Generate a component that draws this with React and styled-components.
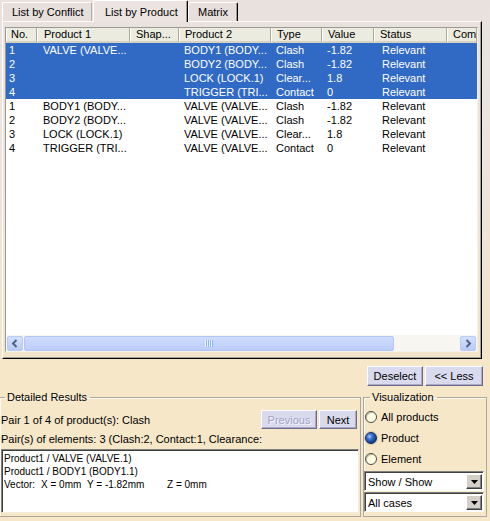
import React from 'react'
import styled, { createGlobalStyle } from 'styled-components'

const Global = createGlobalStyle`
  html, body { margin: 0; padding: 0; }
  body {
    background: #f6e7c8;
    font-family: "Liberation Sans", Arial, sans-serif;
    font-size: 11px;
    color: #000;
  }
`

const Window = styled.div`
  width: 490px;
  height: 521px;
  overflow: hidden;
  background: #f6e7c8;
  display: flex;
  flex-direction: column;
`

const TopArea = styled.div`
  background: linear-gradient(#e9e1de 0%, #ede5dc 55%, #f3e5cb 100%);
`

const TabStrip = styled.div`
  display: flex;
  align-items: flex-end;
  height: 21px;
  padding-left: 2px;
`

const Tab = styled.div`
  position: relative;
  box-sizing: border-box;
  height: ${p => (p.$active ? 22 : 19)}px;
  margin-bottom: ${p => (p.$active ? -1 : 0)}px;
  margin-left: ${p => (p.$active ? 1 : 0)}px;
  z-index: ${p => (p.$active ? 2 : 1)};
  width: ${p => p.$w}px;
  padding-left: ${p => (p.$active ? 11 : 9)}px;
  display: flex;
  align-items: center;
  background: ${p => (p.$active ? '#ebe4e1' : '#e7dfdb')};
  border-top: 1px solid #fff;
  border-left: 1px solid #fff;
  border-right: 1px solid ${p => (p.$dark ? '#000' : '#b4aca8')};
  box-shadow: ${p => (p.$dark ? 'inset -1px 0 0 #a09a96' : 'none')};
  border-radius: 2px 2px 0 0;
  white-space: nowrap;
`

const Panel = styled.div`
  box-sizing: border-box;
  width: 480px;
  height: 338px;
  margin-left: 2px;
  border-top: 1px solid #fff;
  border-left: 1px solid #fff;
  border-right: 1px solid #000;
  border-bottom: 1px solid #000;
  box-shadow: inset -1px -1px 0 #a8a29c;
  padding: 5px 3px 6px 2px;
`

const ListView = styled.div`
  box-sizing: border-box;
  height: 325px;
  border: 1px solid;
  border-color: #9c9894 #f4f0ea #f4f0ea #9c9894;
  background: #fff;
  display: flex;
  flex-direction: column;
`

const cols = '31px 93px 49px 92px 51px 52px 73px 30px'

const HeaderRow = styled.div`
  display: grid;
  grid-template-columns: ${cols};
  height: 15px;
  overflow: hidden;
`

const HeadCell = styled.div`
  box-sizing: border-box;
  height: 15px;
  line-height: 13px;
  padding-left: ${p => p.$pad}px;
  background: #ecebdf;
  border-left: 1px solid #fff;
  border-right: 1px solid #aca899;
  border-bottom: 2px solid #d6d2c2;
  white-space: nowrap;
  overflow: hidden;
`

const Rows = styled.div`
  flex: 1;
  overflow: hidden;
`

const Row = styled.div`
  display: grid;
  grid-template-columns: ${cols};
  height: 14px;
  line-height: 14px;
  background: ${p => (p.$sel ? '#316ac5' : '#fff')};
  color: ${p => (p.$sel ? '#fff' : '#000')};
`

const Cell = styled.div`
  padding-left: ${p => p.$pad}px;
  white-space: nowrap;
  overflow: hidden;
`

const HScroll = styled.div`
  display: flex;
  align-items: center;
  gap: 1px;
  height: 16px;
  padding: 0 1px;
  background: #f7f6f0;
`

const ScrollBtn = styled.div`
  box-sizing: border-box;
  width: 16px;
  height: 15px;
  border-radius: 2px;
  border: 1px solid #b9cbf3;
  background: linear-gradient(#d4e0fd, #b9cbf7);
  display: flex;
  align-items: center;
  justify-content: center;
`

const Thumb = styled.div`
  box-sizing: border-box;
  width: 370px;
  height: 15px;
  border-radius: 2px;
  border: 1px solid #b2c5f3;
  background: linear-gradient(#cfdcfd, #bccdf8);
  display: flex;
  align-items: center;
  justify-content: center;
`

const Track = styled.div`
  flex: 1;
`

const ButtonRow = styled.div`
  display: flex;
  justify-content: flex-end;
  gap: 2px;
  padding: 7px 7px 0 0;
`

const Button = styled.div`
  box-sizing: border-box;
  width: ${p => p.$w}px;
  height: ${p => p.$h || 20}px;
  display: flex;
  align-items: center;
  justify-content: center;
  background: #dadaee;
  border: 1px solid;
  border-color: #fdfdff #6c6c8c #6c6c8c #fdfdff;
  box-shadow: inset -1px -1px 0 #a9a9c6;
  color: ${p => (p.$disabled ? '#a4a4c4' : '#000')};
  text-shadow: ${p => (p.$disabled ? '1px 1px 0 #f4f4ff' : 'none')};
  white-space: nowrap;
`

const NavButtons = styled.div`
  display: flex;
  gap: 2px;
`

const BottomRow = styled.div`
  display: flex;
  gap: 2px;
  margin-top: 5px;
  margin-left: -1px;
`

const GroupBox = styled.fieldset`
  box-sizing: border-box;
  width: ${p => p.$w}px;
  height: 126px;
  margin: 0;
  padding: 0;
  border: 1px solid #aca69c;
  box-shadow: inset 1px 1px 0 #fffaf0;
  min-width: 0;
`

const Legend = styled.legend`
  margin-left: ${p => p.$ml}px;
  padding: 0 3px 0 2px;
  line-height: 13px;
`

const InfoRow = styled.div`
  display: flex;
  align-items: center;
  height: 19px;
  margin-top: 6px;
  padding: 0 3px 0 1px;
`

const InfoText = styled.div`
  flex: 1;
  white-space: nowrap;
  overflow: hidden;
`

const InfoLine = styled.div`
  height: 13px;
  line-height: 13px;
  margin-top: 4px;
  padding-left: 1px;
  white-space: nowrap;
  overflow: hidden;
`

const TextBox = styled.div`
  box-sizing: border-box;
  width: 358px;
  height: 64px;
  margin-top: 3px;
  margin-left: 1px;
  background: #fff;
  border: 1px solid;
  border-color: #808080 #f4ecdc #f4ecdc #808080;
  box-shadow: inset 1px 1px 0 #404040;
  padding: 2px 2px;
  font-size: 10px;
  line-height: 13px;
`

const TextLine = styled.div`
  display: flex;
  white-space: nowrap;
`

const Field = styled.span`
  flex: none;
  width: ${p => (p.$w ? `${p.$w}px` : 'auto')};
`

const RadioList = styled.div`
  display: flex;
  flex-direction: column;
  padding-top: 2px;
`

const RadioRow = styled.div`
  display: flex;
  align-items: center;
  gap: 4px;
  height: 21px;
  padding-left: 1px;
`

const RadioDot = styled.span`
  box-sizing: border-box;
  width: 12px;
  height: 12px;
  border-radius: 50%;
  border: 1px solid ${p => (p.$on ? '#0c2a66' : '#4a4a4a')};
  background: ${p =>
    p.$on
      ? 'radial-gradient(circle at 35% 35%, #a8c8ff 0, #3d72d0 30%, #12408e 70%, #0a2660 100%)'
      : '#fffce4'};
  box-shadow: ${p => (p.$on ? '0 0 0 1px #d8c8a8' : 'inset 1px 1px 0 #c8c0a0')};
`

const Combo = styled.div`
  box-sizing: border-box;
  display: flex;
  align-items: center;
  width: 120px;
  height: 20px;
  margin-top: ${p => p.$mt}px;
  background: #fff;
  border: 1px solid;
  border-color: #808080 #fff #fff #808080;
  box-shadow: inset 1px 1px 0 #404040;
  padding: 2px 1px 1px 3px;
`

const ComboText = styled.div`
  flex: 1;
  white-space: nowrap;
`

const ComboBtn = styled.div`
  box-sizing: border-box;
  width: 16px;
  height: 15px;
  background: #d4d0c8;
  border: 1px solid;
  border-color: #fff #404040 #404040 #fff;
  box-shadow: inset -1px -1px 0 #808080;
  display: flex;
  align-items: center;
  justify-content: center;
`

const Chevron = ({ dir }) => (
  <svg width="8" height="9" viewBox="0 0 8 9">
    <polyline
      points={dir === 'left' ? '5.5,1 2,4.5 5.5,8' : '2.5,1 6,4.5 2.5,8'}
      fill="none"
      stroke="#4d6185"
      strokeWidth="2"
    />
  </svg>
)

const Grip = () => (
  <svg width="8" height="7" viewBox="0 0 8 7">
    {[0, 2, 4, 6].map(x => (
      <g key={x}>
        <rect x={x} y="0" width="1" height="7" fill="#eef4fe" />
        <rect x={x + 1} y="0" width="1" height="7" fill="#8cb0f8" />
      </g>
    ))}
  </svg>
)

const DownArrow = () => (
  <svg width="7" height="4" viewBox="0 0 7 4">
    <polygon points="0,0 7,0 3.5,4" fill="#000" />
  </svg>
)

const headers = [
  ['No.', 4],
  ['Product 1', 6],
  ['Shap...', 5],
  ['Product 2', 5],
  ['Type', 5],
  ['Value', 5],
  ['Status', 5],
  ['Comm', 5],
]

const rows = [
  { no: '1', p1: 'VALVE (VALVE...', p2: 'BODY1 (BODY...', type: 'Clash', value: '-1.82', sel: true },
  { no: '2', p1: '', p2: 'BODY2 (BODY...', type: 'Clash', value: '-1.82', sel: true },
  { no: '3', p1: '', p2: 'LOCK (LOCK.1)', type: 'Clear...', value: '1.8', sel: true },
  { no: '4', p1: '', p2: 'TRIGGER (TRI...', type: 'Contact', value: '0', sel: true },
  { no: '1', p1: 'BODY1 (BODY...', p2: 'VALVE (VALVE...', type: 'Clash', value: '-1.82' },
  { no: '2', p1: 'BODY2 (BODY...', p2: 'VALVE (VALVE...', type: 'Clash', value: '-1.82' },
  { no: '3', p1: 'LOCK (LOCK.1)', p2: 'VALVE (VALVE...', type: 'Clear...', value: '1.8' },
  { no: '4', p1: 'TRIGGER (TRI...', p2: 'VALVE (VALVE...', type: 'Contact', value: '0' },
]

export default function App() {
  return (
    <>
      <Global />
      <Window>
        <TopArea>
          <TabStrip>
            <Tab $w={90}>List by Conflict</Tab>
            <Tab $w={95} $active $dark>List by Product</Tab>
            <Tab $w={50} $dark>Matrix</Tab>
          </TabStrip>
          <Panel>
            <ListView>
              <HeaderRow>
                {headers.map(([h, pad]) => (
                  <HeadCell key={h} $pad={pad}>{h}</HeadCell>
                ))}
              </HeaderRow>
              <Rows>
                {rows.map((r, i) => (
                  <Row key={i} $sel={r.sel}>
                    <Cell $pad={3}>{r.no}</Cell>
                    <Cell $pad={6}>{r.p1}</Cell>
                    <Cell $pad={5}></Cell>
                    <Cell $pad={5}>{r.p2}</Cell>
                    <Cell $pad={5}>{r.type}</Cell>
                    <Cell $pad={5}>{r.value}</Cell>
                    <Cell $pad={8}>Relevant</Cell>
                    <Cell $pad={5}></Cell>
                  </Row>
                ))}
              </Rows>
              <HScroll>
                <ScrollBtn><Chevron dir="left" /></ScrollBtn>
                <Thumb><Grip /></Thumb>
                <Track />
                <ScrollBtn><Chevron dir="right" /></ScrollBtn>
              </HScroll>
            </ListView>
          </Panel>
        </TopArea>

        <ButtonRow>
          <Button $w={56}>Deselect</Button>
          <Button $w={58}>&lt;&lt; Less</Button>
        </ButtonRow>

        <BottomRow>
          <GroupBox $w={362}>
            <Legend $ml={5}>Detailed Results</Legend>
            <InfoRow>
              <InfoText>Pair 1 of 4 of product(s): Clash</InfoText>
              <NavButtons>
                <Button $w={56} $h={19} $disabled>Previous</Button>
                <Button $w={38} $h={19}>Next</Button>
              </NavButtons>
            </InfoRow>
            <InfoLine>Pair(s) of elements: 3 (Clash:2, Contact:1, Clearance:</InfoLine>
            <TextBox>
              <TextLine>Product1 / VALVE (VALVE.1)</TextLine>
              <TextLine>Product1 / BODY1 (BODY1.1)</TextLine>
              <TextLine>
                <Field $w={37}>Vector:</Field>
                <Field $w={46}>X = 0mm</Field>
                <Field $w={80}>Y = -1.82mm</Field>
                <Field>Z = 0mm</Field>
              </TextLine>
            </TextBox>
          </GroupBox>

          <GroupBox $w={124}>
            <Legend $ml={6}>Visualization</Legend>
            <RadioList>
              <RadioRow><RadioDot />All products</RadioRow>
              <RadioRow><RadioDot $on />Product</RadioRow>
              <RadioRow><RadioDot />Element</RadioRow>
            </RadioList>
            <Combo $mt={2}>
              <ComboText>Show / Show</ComboText>
              <ComboBtn><DownArrow /></ComboBtn>
            </Combo>
            <Combo $mt={1}>
              <ComboText>All cases</ComboText>
              <ComboBtn><DownArrow /></ComboBtn>
            </Combo>
          </GroupBox>
        </BottomRow>
      </Window>
    </>
  )
}
